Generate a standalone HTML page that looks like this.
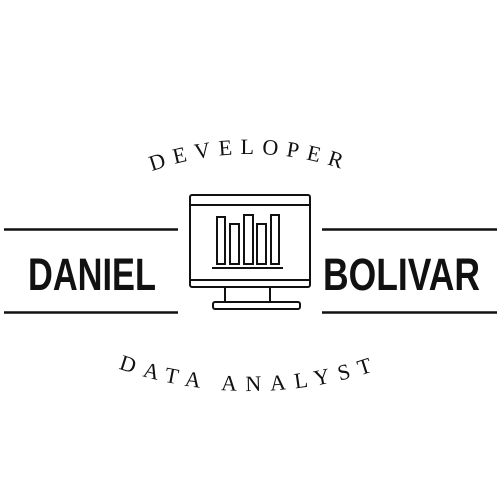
<!DOCTYPE html>
<html><head><style>html,body{margin:0;padding:0;background:#fff;width:500px;height:500px;overflow:hidden}</style></head>
<body>
<svg width="500" height="500" viewBox="0 0 500 500" xmlns="http://www.w3.org/2000/svg">
<defs>
<path id="top" d="M -37,441 A 287 287 0 0 1 537,441"/>
<path id="bot" d="M -145,-4 A 395 395 0 0 0 645,-4"/>
</defs>
<g stroke="#111" stroke-width="2.5">
<line x1="4" y1="229.5" x2="178" y2="229.5"/>
<line x1="4" y1="312.5" x2="178" y2="312.5"/>
<line x1="322" y1="229.5" x2="497" y2="229.5"/>
<line x1="322" y1="312.5" x2="497" y2="312.5"/>
</g>
<text x="28" y="290" font-family="Liberation Sans, sans-serif" font-weight="bold" font-size="45" textLength="128" lengthAdjust="spacingAndGlyphs" fill="#111">DANIEL</text>
<text x="323" y="290" font-family="Liberation Sans, sans-serif" font-weight="bold" font-size="45" textLength="157" lengthAdjust="spacingAndGlyphs" fill="#111">BOLIVAR</text>
<text font-family="Liberation Serif, serif" font-size="22" letter-spacing="8" fill="#111" text-anchor="middle"><textPath href="#top" startOffset="50%">DEVELOPER</textPath></text>
<text font-family="Liberation Serif, serif" font-size="22" letter-spacing="9" fill="#111" text-anchor="middle"><textPath href="#bot" startOffset="50%">DATA ANALYST</textPath></text>
<g fill="none" stroke="#111" stroke-width="2">
<rect x="190" y="195" width="120" height="92" rx="2"/>
<line x1="190" y1="205" x2="310" y2="205"/>
<line x1="190" y1="280" x2="310" y2="280"/>
<rect x="225" y="287" width="45" height="15"/>
<rect x="213" y="302" width="87" height="7" rx="2"/>
<rect x="217" y="217" width="8" height="47"/>
<rect x="230" y="224" width="9" height="40"/>
<rect x="244" y="215" width="9" height="49"/>
<rect x="257" y="224" width="9" height="40"/>
<rect x="271" y="215" width="8" height="49"/>
<line x1="212" y1="268" x2="283" y2="268"/>
</g>
</svg>
</body></html>
